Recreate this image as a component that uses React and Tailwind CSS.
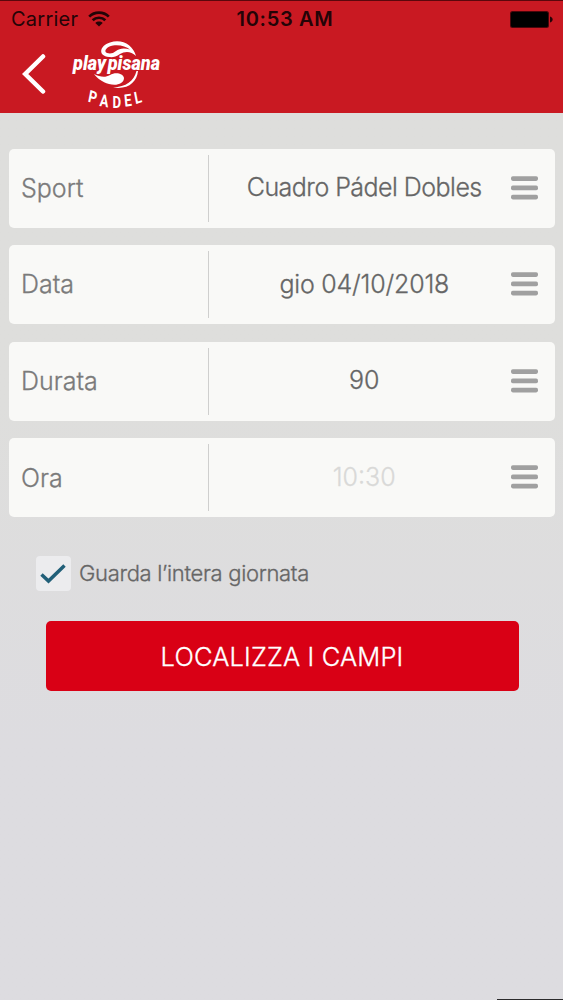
const fields = [
  { label: 'Sport', value: 'Cuadro Pádel Dobles', tracking: 'tracking-[-0.53px]' },
  { label: 'Data', value: 'gio 04/10/2018', tracking: 'tracking-[-0.2px]' },
  { label: 'Durata', value: '90', tracking: 'tracking-normal' },
  { label: 'Ora', value: '10:30', tracking: 'tracking-normal', disabled: true },
]

function WifiIcon() {
  return (
    <svg className="w-[22px] h-4" viewBox="0 0 22 16" fill="none" stroke="#240407" strokeWidth="2.7">
      <path d="M1.2 5.6 C6.5 .3 15.5 .3 20.8 5.6" />
      <path d="M4.7 9.3 C8 5.9 14 5.9 17.3 9.3" />
      <path d="M11 15.6 L7.3 11.9 C9.2 10.1 12.8 10.1 14.7 11.9 Z" fill="#240407" stroke="none" />
    </svg>
  )
}

function BatteryIcon() {
  return (
    <svg className="w-[43px] h-[17px]" viewBox="0 0 43 17">
      <rect x="0" y="0" width="39" height="17" rx="2.5" fill="#4a060b" />
      <rect x="1" y="1" width="37" height="15" rx="1.5" fill="#000" />
      <path d="M40 5.5 C43.5 6.5 43.5 10.5 40 11.5 Z" fill="#240407" />
    </svg>
  )
}

function Logo() {
  return (
    <svg className="w-[92px] h-[72px] overflow-visible" viewBox="0 0 92 72" fill="#fff" fontFamily="Roboto, Liberation Sans, sans-serif">
      {/* ball, upper swirl */}
      <path fillRule="evenodd" d="M37 17 C26 16 27 6 38 2.5 C50 -1.5 61 5 64 16 C59 11 53 11 48 14 C44 17 40 17.5 37 17 Z M35 13 C31 11 35 6.5 41 5.5 C48 4.5 54 6.5 58 9.5 C52 7.5 47 8.5 44 11 C41 13.5 38 14 35 13 Z" />
      {/* ball, lower swirl */}
      <path d="M22 34 C28 37 33 38 38 35 C43 32 51 33 52 38 C52 44 44 46 37 44 C30 42 25 38 22 34 Z" />
      <path d="M41 47.5 C54 47 62 41 64.5 31 L66 31 C65 42 56 50 41 47.5 Z" />
      <text x="1" y="30" fontSize="20" fontWeight="900" fontStyle="italic" wordSpacing="-3" textLength="87" lengthAdjust="spacingAndGlyphs" stroke="#c91922" strokeWidth="1.2" paintOrder="stroke">
        play pisana
      </text>
      <g transform="scale(.78 1)">
        <text x="20 35 52 67.5 81.5" y="61.5 66 67.7 66.7 64.2" rotate="14 7 0 -7 -14" fontSize="17" fontWeight="700">
          PADEL
        </text>
      </g>
    </svg>
  )
}

function MenuIcon() {
  return (
    <svg className="w-[27px] h-6" viewBox="0 0 27 24" fill="#a0a0a0">
      <rect x="0" y="0.3" width="27" height="4.6" rx="1.8" />
      <rect x="0" y="9.6" width="27" height="4.6" rx="1.8" />
      <rect x="0" y="18.8" width="27" height="4.6" rx="1.8" />
    </svg>
  )
}

function FieldRow({ label, value, tracking, disabled }) {
  const color = disabled ? 'text-[#d9d9d8]' : 'text-[#666]'
  return (
    <div className="flex items-center h-[79px] rounded-[5px] bg-[#f9f9f7]">
      <span className="w-[199px] pl-[12.5px] pt-px text-[25px] text-[#7b7b7b]">{label}</span>
      <span className="w-[1.5px] h-[67px] bg-[#cfcfce]" />
      <span className={`flex-1 pl-[9px] text-center text-[25px] ${tracking} ${color}`}>{value}</span>
      <div className="mr-[17px] pb-px">
        <MenuIcon />
      </div>
    </div>
  )
}

export default function App() {
  return (
    <div className="flex flex-col w-[563px] h-[1000px] overflow-hidden bg-linear-to-b from-[#dededc] from-40% to-[#dddce0] to-75% font-['Inter','Liberation_Sans',sans-serif] font-light">
      <header className="h-[113px] shrink-0 bg-[#c91922] border-t border-[#5b070c]">
        <div className="grid grid-cols-3 items-center h-9 pl-[11px] pr-[10px] text-[20px] text-[#240407]">
          <div className="flex items-center gap-[10px] font-normal tracking-[0.25px]">
            <span>Carrier</span>
            <WifiIcon />
          </div>
          <span className="pl-[6px] text-center font-semibold tracking-[0.7px]">10:53 AM</span>
          <div className="flex justify-end">
            <BatteryIcon />
          </div>
        </div>
        <div className="flex items-start pl-[22px]">
          <svg className="w-6 h-10 mt-[17px]" viewBox="0 0 24 40" fill="none" stroke="#fff" strokeWidth="4.5">
            <path d="M21 2.5 L3.2 20 L21 37.5" strokeLinecap="round" strokeLinejoin="miter" />
          </svg>
          <div className="ml-[26px] mt-[3px]">
            <Logo />
          </div>
        </div>
      </header>

      <main className="px-[8.5px] pt-[35.5px] [-webkit-text-stroke:0.3px_currentColor]">
        <div className="flex flex-col gap-[17.6px]">
          {fields.map((field) => (
            <FieldRow key={field.label} {...field} />
          ))}
        </div>

        <div className="flex items-center mt-[39px] ml-[27px] h-[35px]">
          <div className="flex items-center justify-center w-[35px] h-[35px] rounded-[4px] bg-[#ececee]">
            <svg className="w-7 h-5" viewBox="0 0 28 20" fill="none" stroke="#215f78" strokeWidth="3.5">
              <path d="M2.5 10.5 L9.5 17 L25.5 1.5" />
            </svg>
          </div>
          <span className="ml-[8.5px] text-[22px] tracking-[-0.32px] text-[#666]">Guarda l’intera giornata</span>
        </div>

        <button className="block w-[473px] h-[70px] mt-[30px] ml-[37px] pt-px rounded-[5px] bg-[#d90015] text-[25.5px] tracking-[0.15px] text-white">
          LOCALIZZA I CAMPI
        </button>
      </main>

      {/* home bar edge */}
      <div className="mt-auto ml-auto w-[66px] h-[1.5px] bg-[#2b2a2c]" />
    </div>
  )
}
